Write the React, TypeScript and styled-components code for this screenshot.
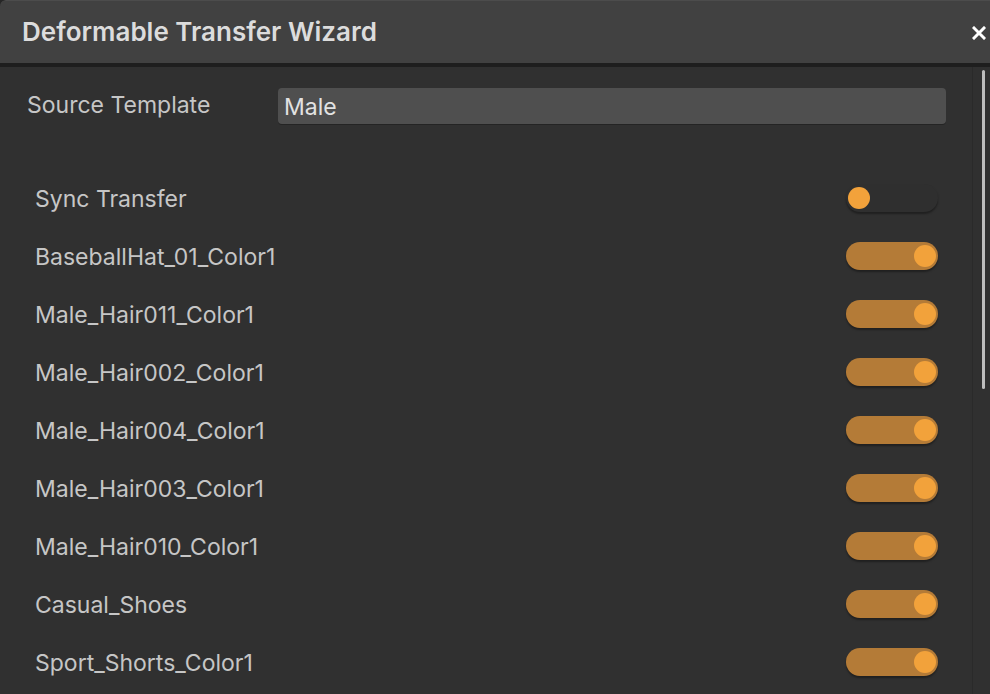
import React from "react";
import styled, { createGlobalStyle } from "styled-components";

const GlobalStyle = createGlobalStyle`
  html, body {
    margin: 0;
    padding: 0;
    background: #262626;
  }
  body {
    font-family: Inter, "Noto Sans", sans-serif;
  }
`;

const Window = styled.div`
  width: 990px;
  height: 694px;
  display: flex;
  flex-direction: column;
  overflow: hidden;
  background: #303030;
  border-top-left-radius: 6px;
`;

const Header = styled.div`
  height: 62px;
  flex-shrink: 0;
  display: flex;
  align-items: center;
  justify-content: space-between;
  padding: 0 3px 0 22px;
  background: #414141;
  border-top: 1px solid #4c4c4c;
  border-bottom: 4px solid #1e1e1e;
  border-top-left-radius: 6px;
`;

const Title = styled.h1`
  margin: 0;
  font-size: 26px;
  font-weight: 600;
  color: #dcdcdc;
  margin-top: -2px;
`;

const CloseButton = styled.button`
  border: none;
  background: none;
  padding: 0;
  width: 16px;
  height: 16px;
  display: flex;
  align-items: center;
  justify-content: center;
  cursor: pointer;
  margin-top: 2px;
`;

const Body = styled.div`
  flex: 1;
  display: flex;
  min-height: 0;
`;

const Content = styled.div`
  flex: 1;
  min-width: 0;
  display: flex;
  flex-direction: column;
  padding-top: 21px;
`;

const FieldRow = styled.div`
  flex-shrink: 0;
  display: flex;
  align-items: center;
  padding: 0 26px 0 27px;
  margin-bottom: 46px;
`;

const FieldLabel = styled.label`
  width: 251px;
  flex-shrink: 0;
  font-size: 23px;
  color: #c6c6c6;
  margin-top: -2px;
`;

const TextInput = styled.input`
  flex: 1;
  min-width: 0;
  height: 36px;
  box-sizing: border-box;
  border: none;
  border-radius: 4px;
  background: #4f4f4f;
  box-shadow: 0 1px 0 #242424;
  color: #e2e2e2;
  font-family: inherit;
  font-size: 23px;
  padding: 1px 6px 0;
  outline: none;
`;

const Row = styled.div`
  height: 58px;
  flex-shrink: 0;
  display: flex;
  align-items: center;
  justify-content: space-between;
  padding: 0 34px 0 35px;
`;

const RowLabel = styled.span`
  font-size: 23px;
  color: #c6c6c6;
`;

const Track = styled.div<{ $on: boolean }>`
  width: 92px;
  height: 28px;
  box-sizing: border-box;
  border-radius: 14px;
  padding: 0 2px;
  display: flex;
  align-items: center;
  justify-content: ${(p) => (p.$on ? "flex-end" : "flex-start")};
  background: ${(p) => (p.$on ? "#b47b37" : "#2f2f2f")};
  box-shadow: 0 2px 2px rgba(0, 0, 0, 0.35);
  margin-top: -3px;
`;

const Knob = styled.div`
  width: 22px;
  height: 22px;
  border-radius: 50%;
  background: #f2a23b;
`;

const ScrollTrack = styled.div`
  width: 18px;
  flex-shrink: 0;
  box-sizing: border-box;
  border-left: 1px solid #2a2a2a;
  padding: 3px 0 0 9px;
`;

const ScrollThumb = styled.div`
  width: 3px;
  height: 319px;
  border-radius: 2px;
  background: #bdbdbd;
`;

const items: { name: string; on: boolean }[] = [
  { name: "Sync Transfer", on: false },
  { name: "BaseballHat_01_Color1", on: true },
  { name: "Male_Hair011_Color1", on: true },
  { name: "Male_Hair002_Color1", on: true },
  { name: "Male_Hair004_Color1", on: true },
  { name: "Male_Hair003_Color1", on: true },
  { name: "Male_Hair010_Color1", on: true },
  { name: "Casual_Shoes", on: true },
  { name: "Sport_Shorts_Color1", on: true },
];

function Toggle({ on }: { on: boolean }) {
  return (
    <Track $on={on}>
      <Knob />
    </Track>
  );
}

export default function App() {
  return (
    <>
      <GlobalStyle />
      <Window>
        <Header>
          <Title>Deformable Transfer Wizard</Title>
          <CloseButton aria-label="Close">
            <svg width="14" height="14" viewBox="0 0 14 14">
              <path d="M2 2 L12 12 M12 2 L2 12" stroke="#ffffff" strokeWidth="3" strokeLinecap="square" />
            </svg>
          </CloseButton>
        </Header>
        <Body>
          <Content>
            <FieldRow>
              <FieldLabel>Source Template</FieldLabel>
              <TextInput defaultValue="Male" />
            </FieldRow>
            {items.map((it) => (
              <Row key={it.name}>
                <RowLabel>{it.name}</RowLabel>
                <Toggle on={it.on} />
              </Row>
            ))}
          </Content>
          <ScrollTrack>
            <ScrollThumb />
          </ScrollTrack>
        </Body>
      </Window>
    </>
  );
}
